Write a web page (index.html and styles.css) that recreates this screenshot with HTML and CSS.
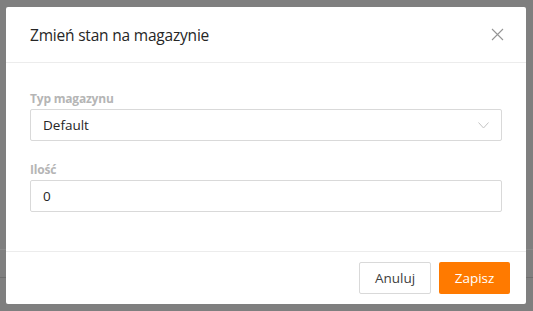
FILE: index.html
```html
<!DOCTYPE html>
<html lang="pl">

<head>
  <meta charset="UTF-8">
  <meta name="viewport" content="width=device-width, initial-scale=1.0">
  <title>Zmień stan na magazynie</title>
  <link rel="stylesheet" href="styles.css">
</head>

<body>
  <div class="backdrop">
    <div class="modal">
      <div class="modal-header">
        <h2 class="modal-title">Zmień stan na magazynie</h2>
        <button class="modal-close" aria-label="Zamknij">
          <svg width="13" height="13" viewBox="0 0 13 13">
            <path d="M1 1 L12 12 M12 1 L1 12" stroke="#959595" stroke-width="1.1" fill="none" />
          </svg>
        </button>
      </div>

      <div class="modal-body">
        <div class="field">
          <label class="field-label">Typ magazynu</label>
          <div class="select">
            <span>Default</span>
            <svg width="11" height="7" viewBox="0 0 11 7">
              <path d="M0.5 0.5 L5.5 6 L10.5 0.5" stroke="#c4c4c4" stroke-width="1" fill="none" />
            </svg>
          </div>
        </div>

        <div class="field">
          <label class="field-label">Ilość</label>
          <input class="input" type="text" value="0">
        </div>
      </div>

      <div class="modal-footer">
        <button class="btn btn-cancel">Anuluj</button>
        <button class="btn btn-save">Zapisz</button>
      </div>
    </div>
  </div>
</body>

</html>
```

FILE: styles.css
```css
body {
  margin: 0;
  font-family: "Open Sans", "Noto Sans", sans-serif;
  background: linear-gradient(to bottom,
      #7f7f7f 249px, #898989 249px, #898989 250px,
      #7f7f7f 250px, #7f7f7f 277px, #6e6e6e 277px, #6e6e6e 278px,
      #7f7f7f 278px);
  height: 311px;
}

.backdrop {
  padding: 7px 7px 0 6px;
}

.modal {
  width: 520px;
  height: 297px;
  background: #fff;
  border-radius: 2px;
  display: flex;
  flex-direction: column;
}

.modal-header {
  height: 55px;
  border-bottom: 1px solid #ececec;
  display: flex;
  align-items: center;
  justify-content: space-between;
  padding: 0 22px 0 24px;
}

.modal-title {
  margin: 0;
  font-size: 15.5px;
  font-weight: 400;
  color: #262626;
  letter-spacing: -0.2px;
}

.modal-close {
  border: none;
  background: none;
  padding: 0;
  display: flex;
  cursor: pointer;
}

.modal-body {
  flex: 1;
  padding: 28px 24px 0 24px;
}

.field {
  margin-bottom: 21px;
}

.field-label {
  display: block;
  font-size: 12px;
  font-weight: 700;
  color: #b5b5b5;
  line-height: 16px;
  margin-bottom: 2px;
  letter-spacing: -0.2px;
}

.select,
.input {
  box-sizing: border-box;
  width: 100%;
  height: 32px;
  border: 1px solid #d9d9d9;
  border-radius: 2px;
  padding: 0 12px;
  font-family: inherit;
  font-size: 13.5px;
  color: #262626;
  background: #fff;
}

.select {
  display: flex;
  align-items: center;
  justify-content: space-between;
}

.modal-footer {
  border-top: 1px solid #ececec;
  height: 52px;
  display: flex;
  align-items: center;
  justify-content: flex-end;
  gap: 8px;
  padding: 0 16px;
}

.btn {
  height: 32px;
  border-radius: 2px;
  font-family: inherit;
  font-size: 13.5px;
  cursor: pointer;
}

.btn-cancel {
  width: 72px;
  border: 1px solid #d9d9d9;
  background: #fff;
  color: #404040;
}

.btn-save {
  width: 71px;
  border: none;
  background: #ff7a00;
  color: #fff;
}
```
